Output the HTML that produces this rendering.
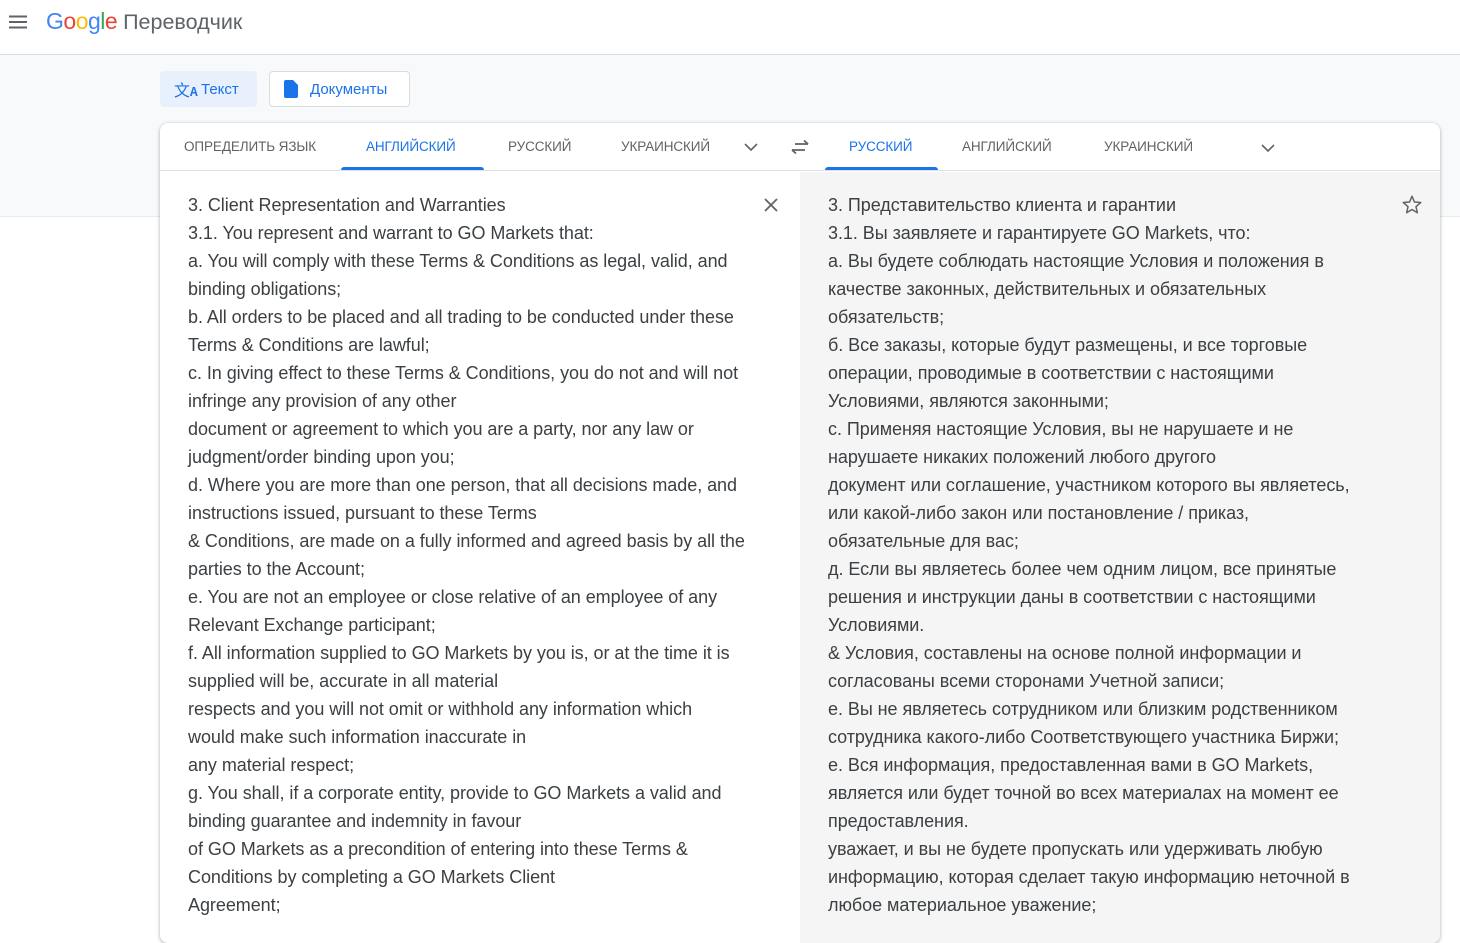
<!DOCTYPE html>
<html><head><meta charset="utf-8"><style>
*{margin:0;padding:0;box-sizing:border-box}
body{width:1460px;height:923px;overflow:hidden;background:#fff;font-family:"Liberation Sans",sans-serif;position:relative}
.hdr{height:55px;border-bottom:1px solid #dadce0;position:relative;background:#fff}
.gray{position:absolute;top:55px;left:0;width:1460px;height:162px;background:#f8f9fa;border-bottom:1px solid #e8eaed}
.btn{position:absolute;top:71px;height:36px;border-radius:4px;font-size:15px;color:#1a73e8;display:flex;align-items:center}
.card{position:absolute;left:160px;top:123px;width:1280px;height:820px;background:#fff;border-radius:8px;box-shadow:0 1px 3px rgba(60,64,67,.3),0 1px 4px rgba(60,64,67,.15);overflow:hidden}
.tabs{height:48px;border-bottom:1px solid #e0e0e0;position:relative}
.tab{position:absolute;top:0;height:48px;line-height:48px;font-size:13.5px;color:#5f6368;letter-spacing:-.1px}
.tab.a{color:#1a73e8}
.ul{position:absolute;bottom:0;height:3px;background:#1a73e8;border-radius:3px 3px 0 0}
.l,.r{position:absolute;top:49px;height:780px;width:640px;font-size:18px;line-height:28px;color:#3c4043;padding:19px 0 0 28px;letter-spacing:-.05px}
.l{left:0}
.r{left:640px;background:#f5f5f5}
</style></head><body>
<div class="hdr">
<svg style="position:absolute;left:8px;top:14px" width="20" height="16" viewBox="0 0 20 16"><path d="M1 2.5h18M1 8h18M1 13.5h18" stroke="#5f6368" stroke-width="2"/></svg>
<div style="position:absolute;left:46px;top:8px;font-size:23px;letter-spacing:-0.5px"><span style="color:#4285f4">G</span><span style="color:#ea4335">o</span><span style="color:#fbbc05">o</span><span style="color:#4285f4">g</span><span style="color:#34a853">l</span><span style="color:#ea4335">e</span> <span style="color:#5f6368;font-size:21.5px;letter-spacing:0">Переводчик</span></div>
</div>
<div class="gray"></div>
<div class="btn" style="left:160px;width:97px;background:#e8f0fe"><span style="margin-left:14px;font-size:16px;font-family:'Noto Sans CJK SC','Liberation Sans',sans-serif">文<span style="font-size:12px;font-weight:bold">A</span></span><span style="font-size:15px;position:absolute;left:41px">Текст</span></div>
<div class="btn" style="left:269px;width:141px;background:#fff;border:1px solid #dadce0"><svg style="margin-left:14px" width="14" height="18" viewBox="0 0 14 18"><path d="M2 0h7l5 5v11a2 2 0 0 1-2 2H2a2 2 0 0 1-2-2V2a2 2 0 0 1 2-2z" fill="#1a73e8"/></svg><span style="margin-left:12px">Документы</span></div>
<div class="card">
<div class="tabs">
<div class="tab" style="left:24px">ОПРЕДЕЛИТЬ ЯЗЫК</div>
<div class="tab a" style="left:206px">АНГЛИЙСКИЙ</div>
<div class="ul" style="left:181px;width:143px"></div>
<div class="tab" style="left:348px">РУССКИЙ</div>
<div class="tab" style="left:461px">УКРАИНСКИЙ</div>
<svg style="position:absolute;left:584px;top:20px" width="14" height="9" viewBox="0 0 14 9"><path d="M1 1l6 6 6-6" stroke="#5f6368" stroke-width="1.6" fill="none"/></svg>
<svg style="position:absolute;left:631px;top:16px" width="18" height="16" viewBox="0 0 18 16"><path d="M17 5H4M13 1.5L17 5M1 11h13M5 14.5L1 11" stroke="#5f6368" stroke-width="1.8" fill="none"/></svg>
<div class="tab a" style="left:689px">РУССКИЙ</div>
<div class="ul" style="left:665px;width:113px"></div>
<div class="tab" style="left:802px">АНГЛИЙСКИЙ</div>
<div class="tab" style="left:944px">УКРАИНСКИЙ</div>
<svg style="position:absolute;left:1101px;top:21px" width="14" height="9" viewBox="0 0 14 9"><path d="M1 1l6 6 6-6" stroke="#5f6368" stroke-width="1.6" fill="none"/></svg>
</div>
<div class="l">
<svg style="position:absolute;left:604px;top:26px" width="14" height="14" viewBox="0 0 14 14"><path d="M1 1l12 12M13 1L1 13" stroke="#5f6368" stroke-width="1.8"/></svg>
3. Client Representation and Warranties<br>3.1. You represent and warrant to GO Markets that:<br>a. You will comply with these Terms &amp; Conditions as legal, valid, and<br>binding obligations;<br>b. All orders to be placed and all trading to be conducted under these<br>Terms &amp; Conditions are lawful;<br>c. In giving effect to these Terms &amp; Conditions, you do not and will not<br>infringe any provision of any other<br>document or agreement to which you are a party, nor any law or<br>judgment/order binding upon you;<br>d. Where you are more than one person, that all decisions made, and<br>instructions issued, pursuant to these Terms<br>&amp; Conditions, are made on a fully informed and agreed basis by all the<br>parties to the Account;<br>e. You are not an employee or close relative of an employee of any<br>Relevant Exchange participant;<br>f. All information supplied to GO Markets by you is, or at the time it is<br>supplied will be, accurate in all material<br>respects and you will not omit or withhold any information which<br>would make such information inaccurate in<br>any material respect;<br>g. You shall, if a corporate entity, provide to GO Markets a valid and<br>binding guarantee and indemnity in favour<br>of GO Markets as a precondition of entering into these Terms &amp;<br>Conditions by completing a GO Markets Client<br>Agreement;
</div>
<div class="r">
<svg style="position:absolute;left:602px;top:23px" width="20" height="19" viewBox="0 0 24 23"><path d="M12 1.5l3 7 7.5.6-5.7 5 1.7 7.4L12 17.6l-6.5 3.9 1.7-7.4-5.7-5 7.5-.6z" stroke="#5f6368" stroke-width="1.8" fill="none" stroke-linejoin="round"/></svg>
3. Представительство клиента и гарантии<br>3.1. Вы заявляете и гарантируете GO Markets, что:<br>а. Вы будете соблюдать настоящие Условия и положения в<br>качестве законных, действительных и обязательных<br>обязательств;<br>б. Все заказы, которые будут размещены, и все торговые<br>операции, проводимые в соответствии с настоящими<br>Условиями, являются законными;<br>c. Применяя настоящие Условия, вы не нарушаете и не<br>нарушаете никаких положений любого другого<br>документ или соглашение, участником которого вы являетесь,<br>или какой-либо закон или постановление / приказ,<br>обязательные для вас;<br>д. Если вы являетесь более чем одним лицом, все принятые<br>решения и инструкции даны в соответствии с настоящими<br>Условиями.<br>&amp; Условия, составлены на основе полной информации и<br>согласованы всеми сторонами Учетной записи;<br>е. Вы не являетесь сотрудником или близким родственником<br>сотрудника какого-либо Соответствующего участника Биржи;<br>е. Вся информация, предоставленная вами в GO Markets,<br>является или будет точной во всех материалах на момент ее<br>предоставления.<br>уважает, и вы не будете пропускать или удерживать любую<br>информацию, которая сделает такую информацию неточной в<br>любое материальное уважение;
</div>
</div>
</body></html>
